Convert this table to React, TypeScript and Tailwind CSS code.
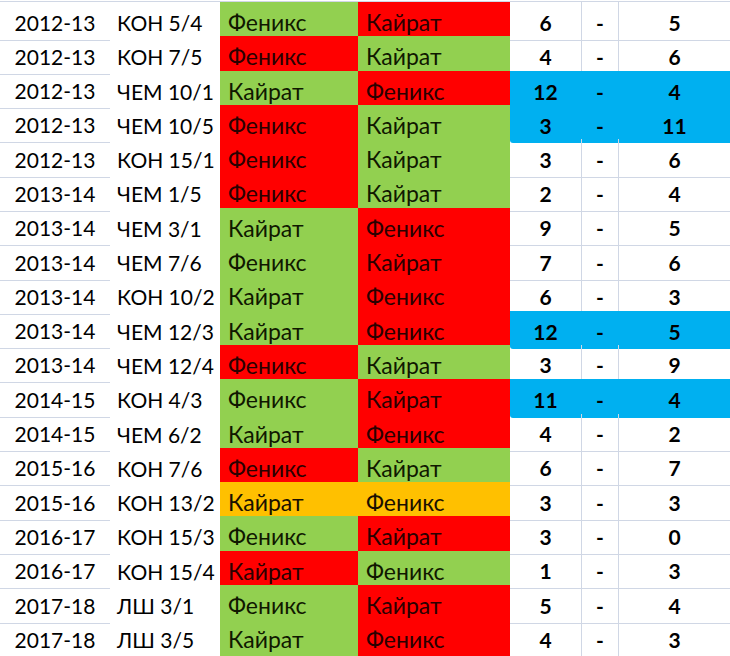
import React from 'react';

type Fill = 'G' | 'R' | 'O';

interface Match {
  season: string;
  stage: string;
  home: string;
  homeFill: Fill;
  away: string;
  awayFill: Fill;
  a: number;
  b: number;
  hl?: boolean;
}

const F = 'Феникс';
const K = 'Кайрат';

const matches: Match[] = [
  { season: '2012-13', stage: 'КОН 5/4', home: F, homeFill: 'G', away: K, awayFill: 'R', a: 6, b: 5 },
  { season: '2012-13', stage: 'КОН 7/5', home: F, homeFill: 'R', away: K, awayFill: 'G', a: 4, b: 6 },
  { season: '2012-13', stage: 'ЧЕМ 10/1', home: K, homeFill: 'G', away: F, awayFill: 'R', a: 12, b: 4, hl: true },
  { season: '2012-13', stage: 'ЧЕМ 10/5', home: F, homeFill: 'R', away: K, awayFill: 'G', a: 3, b: 11, hl: true },
  { season: '2012-13', stage: 'КОН 15/1', home: F, homeFill: 'R', away: K, awayFill: 'G', a: 3, b: 6 },
  { season: '2013-14', stage: 'ЧЕМ 1/5', home: F, homeFill: 'R', away: K, awayFill: 'G', a: 2, b: 4 },
  { season: '2013-14', stage: 'ЧЕМ 3/1', home: K, homeFill: 'G', away: F, awayFill: 'R', a: 9, b: 5 },
  { season: '2013-14', stage: 'ЧЕМ 7/6', home: F, homeFill: 'G', away: K, awayFill: 'R', a: 7, b: 6 },
  { season: '2013-14', stage: 'КОН 10/2', home: K, homeFill: 'G', away: F, awayFill: 'R', a: 6, b: 3 },
  { season: '2013-14', stage: 'ЧЕМ 12/3', home: K, homeFill: 'G', away: F, awayFill: 'R', a: 12, b: 5, hl: true },
  { season: '2013-14', stage: 'ЧЕМ 12/4', home: F, homeFill: 'R', away: K, awayFill: 'G', a: 3, b: 9 },
  { season: '2014-15', stage: 'КОН 4/3', home: F, homeFill: 'G', away: K, awayFill: 'R', a: 11, b: 4, hl: true },
  { season: '2014-15', stage: 'ЧЕМ 6/2', home: K, homeFill: 'G', away: F, awayFill: 'R', a: 4, b: 2 },
  { season: '2015-16', stage: 'КОН 7/6', home: F, homeFill: 'R', away: K, awayFill: 'G', a: 6, b: 7 },
  { season: '2015-16', stage: 'КОН 13/2', home: K, homeFill: 'O', away: F, awayFill: 'O', a: 3, b: 3 },
  { season: '2016-17', stage: 'КОН 15/3', home: F, homeFill: 'G', away: K, awayFill: 'R', a: 3, b: 0 },
  { season: '2016-17', stage: 'КОН 15/4', home: K, homeFill: 'R', away: F, awayFill: 'G', a: 1, b: 3 },
  { season: '2017-18', stage: 'ЛШ 3/1', home: F, homeFill: 'G', away: K, awayFill: 'R', a: 5, b: 4 },
  { season: '2017-18', stage: 'ЛШ 3/5', home: K, homeFill: 'G', away: F, awayFill: 'R', a: 4, b: 3 },
];

const fillClass: Record<Fill, string> = {
  G: 'bg-[#92d050] text-[#101800]',
  R: 'bg-[#ff0000] text-[#2a0000]',
  O: 'bg-[#ffc000] text-[#1a1000]',
};

function TeamCell({ name, fill }: { name: string; fill: Fill }) {
  return (
    <div className={`flex items-center pt-[3px] pl-[8px] text-[23px] border-b border-white/30 ${fillClass[fill]}`}>
      {name}
    </div>
  );
}

export default function App() {
  return (
    <div
      className="w-[730px] h-[656px] overflow-hidden bg-white text-[21px] text-black"
      style={{ fontFamily: 'Lato, "Open Sans", sans-serif' }}
    >
      <div className="mt-[1px] border-t border-[#d0d7e5]">
        {matches.map((m, i) => {
          const next = matches[i + 1];
          const joined = m.hl && next?.hl;
          const scoreBorder = m.hl ? '' : 'border-b border-[#d0d7e5]';
          return (
            <div
              key={i}
              className="grid grid-cols-[110px_110px_138px_152px_71px_38px_111px] h-[34.3px]"
            >
              <div className="flex items-center justify-center pt-[3px] border-b border-[#d0d7e5]">
                {m.season}
              </div>
              <div className="flex items-center pt-[3px] pl-[7px]">{m.stage}</div>
              <TeamCell name={m.home} fill={m.homeFill} />
              <TeamCell name={m.away} fill={m.awayFill} />
              <div
                className={`flex items-center justify-center pt-[3px] font-bold ${
                  m.hl ? 'bg-[#00b0f0]' : ''
                } ${scoreBorder} ${m.hl && !joined ? 'rounded-bl-[3px]' : ''}`}
              >
                {m.a}
              </div>
              <div
                className={`flex items-center justify-center pt-[3px] font-bold ${
                  m.hl ? 'bg-[#00b0f0]' : 'border-x border-[#d0d7e5]'
                } ${scoreBorder}`}
              >
                -
              </div>
              <div
                className={`flex items-center justify-center pt-[3px] font-bold ${
                  m.hl ? 'bg-[#00b0f0]' : ''
                } ${scoreBorder}`}
              >
                {m.b}
              </div>
            </div>
          );
        })}
      </div>
    </div>
  );
}
